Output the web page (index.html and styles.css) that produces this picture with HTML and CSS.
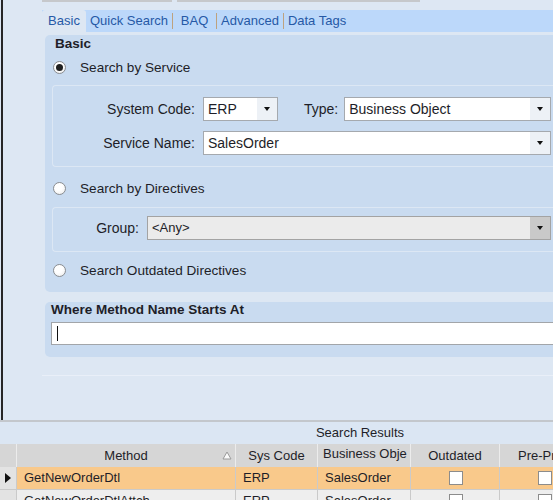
FILE: index.html
```html
<!DOCTYPE html>
<html lang="en">
<head>
    <meta charset="UTF-8">
    <meta name="viewport" content="width=device-width, initial-scale=1.0">
    <title>Method Search</title>
    <link rel="stylesheet" href="styles.css">
</head>
<body>
<div class="page">
    <div class="search-form">
        <div class="top-edges">
            <span class="edge edge-left"></span>
            <span class="edge edge-right"></span>
        </div>

        <div class="tab-strip">
            <div class="tab active">Basic</div>
            <div class="tab">Quick Search</div>
            <div class="tab sep">BAQ</div>
            <div class="tab sep">Advanced</div>
            <div class="tab sep">Data Tags</div>
        </div>

        <div class="tab-panel">
            <div class="group">
                <div class="group-title">Basic</div>
                <div class="radio-row"><span class="radio checked"></span>Search by Service</div>

                <div class="sub-panel">
                    <div class="field-row">
                        <span class="field-label label-wide">System Code:</span>
                        <div class="combo combo-erp"><span class="combo-text">ERP</span><span class="drop"></span></div>
                        <span class="field-label type-label">Type:</span>
                        <div class="combo combo-type"><span class="combo-text">Business Object</span><span class="drop"></span></div>
                    </div>
                    <div class="field-row">
                        <span class="field-label label-wide">Service Name:</span>
                        <div class="combo combo-service"><span class="combo-text">SalesOrder</span><span class="drop"></span></div>
                    </div>
                </div>

                <div class="radio-row radio-gap"><span class="radio"></span>Search by Directives</div>

                <div class="sub-panel sub-panel-small">
                    <div class="field-row">
                        <span class="field-label label-group">Group:</span>
                        <div class="combo combo-group disabled"><span class="combo-text">&lt;Any&gt;</span><span class="drop"></span></div>
                    </div>
                </div>

                <div class="radio-row radio-last"><span class="radio"></span>Search Outdated Directives</div>
            </div>

            <div class="group where-group">
                <div class="group-title where-title">Where Method Name Starts At</div>
                <div class="text-input"><span class="caret"></span></div>
            </div>
        </div>
    </div>

    <div class="results">
        <div class="results-title">Search Results</div>
        <div class="grid">
            <div class="hcell"></div>
            <div class="hcell sort-cell"><span></span><span>Method</span><svg class="sort-glyph" width="10" height="9" viewBox="0 0 10 9"><polygon points="5,1 9,8 1,8" fill="#fafafa" stroke="#9a9a9a" stroke-width="1"/></svg></div>
            <div class="hcell">Sys Code</div>
            <div class="hcell left raised">Business Obje</div>
            <div class="hcell">Outdated</div>
            <div class="hcell left pre">Pre-Pr</div>

            <div class="cell selector"><svg width="6" height="10" viewBox="0 0 6 10"><polygon points="0,0 6,5 0,10" fill="#111"/></svg></div>
            <div class="cell current">GetNewOrderDtl</div>
            <div class="cell current">ERP</div>
            <div class="cell current">SalesOrder</div>
            <div class="cell current check-cell"><span class="checkbox"></span></div>
            <div class="cell current check-cell"><span class="checkbox"></span></div>

            <div class="cell selector"></div>
            <div class="cell">GetNewOrderDtlAttch</div>
            <div class="cell">ERP</div>
            <div class="cell">SalesOrder</div>
            <div class="cell check-cell"><span class="checkbox"></span></div>
            <div class="cell check-cell"><span class="checkbox"></span></div>
        </div>
    </div>
</div>
</body>
</html>
```

FILE: styles.css
```css
body {
    margin: 0;
    width: 553px;
    height: 500px;
    overflow: hidden;
    background-color: #dde7f3;
    font-family: "Liberation Sans", Arial, sans-serif;
    font-size: 13px;
    color: #1e1e28;
}
.page {
    width: 553px;
    overflow: hidden;
}
.search-form {
    height: 420px;
    box-sizing: border-box;
    margin-left: 1px;
    border-left: 2px solid #262626;
    padding-left: 39px;
}
.top-edges {
    display: flex;
    gap: 5px;
    height: 2px;
}
.edge {
    background-color: #c6c8cb;
}
.edge-left {
    width: 130px;
}
.edge-right {
    width: 243px;
}

/* tabs */
.tab-strip {
    margin-top: 8px;
    height: 22px;
    display: flex;
    align-items: center;
    background-color: #bcd8fa;
}
.tab {
    min-width: 44px;
    box-sizing: border-box;
    padding: 0 4px;
    text-align: center;
    line-height: 16px;
    color: #2659a6;
}
.tab.active {
    align-self: stretch;
    line-height: 22px;
    background-color: #dde7f3;
    border-radius: 3px 3px 0 0;
}
.tab.sep {
    border-left: 1px solid #bea27f;
}
.tab-panel {
    padding: 3px 0 18px 3px;
    border-bottom: 1px solid #e9eff8;
}

/* group boxes */
.group {
    background-color: #c9dbf0;
    border-radius: 5px 0 0 5px;
    padding: 2px 0 12px;
}
.group-title {
    font-weight: bold;
    font-size: 13.5px;
    margin-left: 10px;
    line-height: 14px;
}
.radio-row {
    display: flex;
    align-items: center;
    gap: 14px;
    height: 20px;
    margin-top: 6px;
    padding-left: 8px;
    font-size: 13.6px;
}
.radio-gap {
    margin-top: 11px;
}
.radio-last {
    margin-top: 8px;
}
.radio {
    width: 13px;
    height: 13px;
    box-sizing: border-box;
    border: 1px solid #8a8d91;
    border-radius: 50%;
    background: radial-gradient(circle at 40% 35%, #ffffff 40%, #e8e8e8 100%);
    display: flex;
    align-items: center;
    justify-content: center;
}
.radio.checked::after {
    content: "";
    width: 7px;
    height: 7px;
    border-radius: 50%;
    background-color: #1f1f1f;
}
.sub-panel {
    margin: 8px 0 0 7px;
    border: 1px solid #dce7f4;
    border-right: none;
    border-radius: 4px 0 0 4px;
    padding: 11px 0;
    display: flex;
    flex-direction: column;
    gap: 10px;
}
.sub-panel-small {
    margin-top: 9px;
    padding: 8px 0 11px;
}
.field-row {
    display: flex;
    align-items: center;
}
.field-label {
    flex-shrink: 0;
    font-size: 14px;
    text-align: right;
    margin-right: 8px;
}
.label-wide {
    width: 142px;
}
.label-group {
    width: 86px;
}
.type-label {
    margin-left: 26px;
    margin-right: 6px;
}

/* combo boxes */
.combo {
    display: flex;
    flex-shrink: 0;
    height: 24px;
    box-sizing: border-box;
    border: 1px solid #a5a9ae;
    background-color: #fff;
    font-size: 14px;
}
.combo-erp {
    width: 75px;
}
.combo-type {
    width: 207px;
}
.combo-service {
    width: 348px;
}
.combo-group {
    width: 404px;
    font-size: 13px;
}
.combo-text {
    flex: 1;
    padding-left: 4px;
    line-height: 22px;
    white-space: nowrap;
    overflow: hidden;
}
.drop {
    width: 20px;
    background-color: #edf1f6;
    display: flex;
    align-items: center;
    justify-content: center;
}
.drop::after {
    content: "";
    border-left: 3.5px solid transparent;
    border-right: 3.5px solid transparent;
    border-top: 4px solid #111;
}
.combo.disabled {
    background-color: #ebebeb;
    border-color: #a3a3a3;
}
.combo.disabled .drop {
    background-color: #c9c9c9;
}

/* where group */
.where-group {
    margin-top: 10px;
    padding-top: 1px;
}
.where-title {
    margin-left: 6px;
}
.text-input {
    margin: 5px 0 0 6px;
    width: 600px;
    height: 23px;
    box-sizing: border-box;
    border: 1px solid #a2a5a9;
    background-color: #fff;
    display: flex;
    align-items: center;
    padding-left: 5px;
}
.caret {
    width: 1px;
    height: 15px;
    background-color: #111;
}

/* results grid */
.results {
    width: 720px;
    border-top: 2px solid #c3c7cc;
}
.results-title {
    height: 22px;
    line-height: 22px;
    text-align: center;
    background-color: #dbe6f3;
}
.grid {
    display: grid;
    grid-template-columns: 17px 219px 82px 93px 89px 220px;
}
.hcell {
    height: 23px;
    box-sizing: border-box;
    background-color: #d6d6d6;
    border-right: 1px solid #ececec;
    display: flex;
    align-items: center;
    justify-content: center;
    white-space: nowrap;
    overflow: hidden;
}
.hcell.left {
    justify-content: flex-start;
    padding-left: 5px;
}
.hcell.raised {
    align-items: flex-start;
    padding-top: 2px;
}
.hcell.pre {
    padding-left: 18px;
}
.sort-cell {
    display: grid;
    grid-template-columns: 1fr auto 1fr;
    align-items: center;
}
.sort-glyph {
    justify-self: end;
    margin-right: 3px;
}
.cell {
    height: 23px;
    box-sizing: border-box;
    border-right: 1px solid #cacaca;
    border-bottom: 1px solid #cacaca;
    padding-left: 7px;
    line-height: 22px;
    white-space: nowrap;
    overflow: hidden;
    background-color: #eeeeee;
}
.cell.current {
    background-color: #f9c98b;
}
.cell.selector {
    padding-left: 5px;
    background-color: #e3e3e3;
    display: flex;
    align-items: center;
}
.check-cell {
    padding-left: 0;
    display: flex;
    align-items: center;
}
.check-cell .checkbox {
    margin-left: 38px;
}
.checkbox {
    width: 14px;
    height: 14px;
    box-sizing: border-box;
    border: 1px solid #8c8c8c;
    background-color: #fff;
}
```
